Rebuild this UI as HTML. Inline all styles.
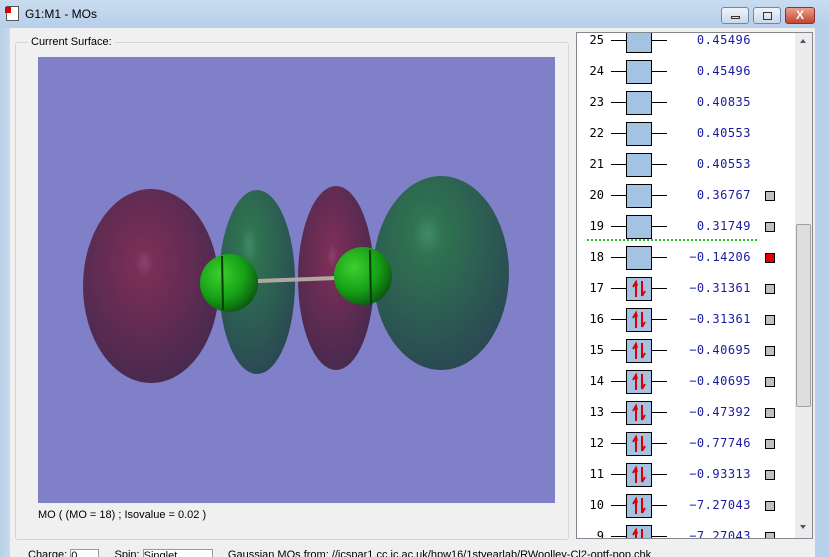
<!DOCTYPE html>
<html><head><meta charset="utf-8"><style>
*{margin:0;padding:0;box-sizing:border-box}
html,body{width:829px;height:557px;overflow:hidden}
body{background:#f0f0f0;position:relative;font-family:"Liberation Sans",sans-serif;font-size:11px}
.title{position:absolute;left:0;top:0;width:829px;height:28px;background:linear-gradient(#c9dcf0,#b7cfe9)}
.lf{position:absolute;left:0;top:28px;width:10px;height:529px;background:linear-gradient(90deg,#b8cfe8,#c8daee)}
.rf{position:absolute;left:815px;top:28px;width:14px;height:529px;background:#b9d0ea}
.tbtn{position:absolute;top:7px;height:17px;border:1px solid #6f86a6;border-radius:3px;background:linear-gradient(#eef3fa,#cbd9ea)}
.grp{position:absolute;left:15px;top:42px;width:554px;height:498px;border:1px solid #d5d5d5;border-radius:3px}
.list{position:absolute;left:576px;top:32px;width:237px;height:507px;background:#fff;border:1px solid #828790;overflow:hidden}
.row{position:absolute;left:0;width:220px;height:24px;font-family:"DejaVu Sans Mono","Liberation Mono",monospace;font-size:12px}
.num{position:absolute;right:193px;top:4px;color:#000}
.ln{position:absolute;left:34px;top:11px;width:56px;height:1px;background:#000}
.bx{position:absolute;left:49px;top:0;width:26px;height:24px;background:#a4c2e2;border:1px solid #000}
.val{position:absolute;right:46px;top:4px;color:#1a1aa0;letter-spacing:0.5px}
.sq{position:absolute;left:188px;top:7px;width:10px;height:10px;background:#c0c0c0;border:1px solid #000}
.sb{position:absolute;left:218px;top:0;width:17px;height:505px;background:#ececec}
</style></head><body>
<div class="title"></div>
<div style="position:absolute;left:6px;top:6px;width:13px;height:15px;background:#fff;border:1px solid #555"></div>
<div style="position:absolute;left:5px;top:7px;width:6px;height:6px;background:#d00"></div>
<div style="position:absolute;left:25px;top:7px;font-size:12px;color:#000">G1:M1 - MOs</div>
<div class="tbtn" style="left:721px;width:28px"><div style="position:absolute;left:9px;top:8px;width:9px;height:3px;border:1px solid #333"></div></div>
<div class="tbtn" style="left:753px;width:28px"><div style="position:absolute;left:9px;top:4px;width:9px;height:8px;border:1px solid #333"></div></div>
<div class="tbtn" style="left:785px;width:30px;background:linear-gradient(#e8a08c,#c5452f);border-color:#8a3426;color:#fff;text-align:center;font-weight:bold;font-size:12px;line-height:15px">X</div>
<div class="lf"></div><div class="rf"></div>
<div class="grp"></div>
<div style="position:absolute;left:28px;top:36px;background:#f0f0f0;padding:0 3px;font-size:11px">Current Surface:</div>
<svg style="position:absolute;left:38px;top:57px" width="517" height="446" viewBox="38 57 517 446">
<defs>
<radialGradient id="p" cx="0.45" cy="0.38" r="0.7"><stop offset="0" stop-color="#8a4470"/><stop offset="0.1" stop-color="#7a2e56"/><stop offset="1" stop-color="#42294e"/></radialGradient>
<radialGradient id="g" cx="0.4" cy="0.3" r="0.75"><stop offset="0" stop-color="#3f8a6a"/><stop offset="0.15" stop-color="#2f7350"/><stop offset="1" stop-color="#2a4654"/></radialGradient>
<radialGradient id="a" cx="0.35" cy="0.35" r="0.7"><stop offset="0" stop-color="#3cd030"/><stop offset="0.6" stop-color="#16a016"/><stop offset="1" stop-color="#0c5a10"/></radialGradient>
</defs>
<rect x="38" y="57" width="517" height="446" fill="#8080c8"/>
<ellipse cx="151" cy="286" rx="68" ry="97" fill="url(#p)"/>
<ellipse cx="257" cy="282" rx="38" ry="92" fill="url(#g)"/>
<ellipse cx="336" cy="278" rx="38" ry="92" fill="url(#p)"/>
<ellipse cx="441" cy="273" rx="68" ry="97" fill="url(#g)"/>
<line x1="258" y1="281" x2="336" y2="278" stroke="#b0a8a0" stroke-width="4"/>
<circle cx="229" cy="283" r="29" fill="url(#a)"/>
<circle cx="363" cy="276" r="29" fill="url(#a)"/>
<line x1="222" y1="256" x2="223" y2="310" stroke="#0a3a0a" stroke-width="2"/>
<line x1="370" y1="250" x2="371" y2="305" stroke="#0a3a0a" stroke-width="2"/>
</svg>
<div style="position:absolute;left:38px;top:509px;font-size:11px">MO ( (MO = 18) ; Isovalue = 0.02 )</div>
<div class="list">
<div class="sb">
<div style="position:absolute;left:5px;top:6px;border:3px solid transparent;border-bottom:4px solid #555;border-top:0"></div>
<div style="position:absolute;left:1px;top:191px;width:15px;height:183px;background:#dedede;border:1px solid #a0a0a0;border-radius:2px"></div>
<div style="position:absolute;left:5px;top:492px;border:3px solid transparent;border-top:4px solid #555;border-bottom:0"></div>
</div>
<div style="position:absolute;left:10px;top:206px;width:170px;border-top:2px dotted #20c020"></div>
</div>
<div style="position:absolute;left:28px;top:549px;font-size:11px;white-space:nowrap">Charge: <span style="display:inline-block;width:29px;height:14px;border:1px solid #999;background:#fff;vertical-align:top">0</span>&nbsp;&nbsp;&nbsp;&nbsp; Spin: <span style="display:inline-block;width:70px;height:14px;border:1px solid #999;background:#fff;vertical-align:top">Singlet</span>&nbsp;&nbsp;&nbsp;&nbsp; Gaussian MOs from: //icspar1.cc.ic.ac.uk/hpw16/1styearlab/RWoolley-Cl2-optf-pop.chk</div>
<script>
var d=[[25,"0.45496"],[24,"0.45496"],[23,"0.40835"],[22,"0.40553"],[21,"0.40553"],[20,"0.36767"],[19,"0.31749"],[18,"-0.14206"],[17,"-0.31361"],[16,"-0.31361"],[15,"-0.40695"],[14,"-0.40695"],[13,"-0.47392"],[12,"-0.77746"],[11,"-0.93313"],[10,"-7.27043"],[9,"-7.27043"]];
var h="";
d.forEach(function(r,i){
var y=28+i*31-32;var occ=r[0]<=17;
h+='<div class="row" style="top:'+y+'px">';
h+='<span class="num">'+r[0]+'</span><div class="ln"></div><div class="bx">'+(occ?'<svg width="24" height="22"><path d="M9 19V4M6 9L9 4L10 8" stroke="#d00" stroke-width="2" fill="none"/><path d="M15 3V18M15 18L18 13" stroke="#d00" stroke-width="2" fill="none"/></svg>':'')+'</div>';
h+='<span class="val">'+r[1].replace("-","&minus;")+'</span>';
if(r[0]<=20)h+='<div class="sq"'+(r[0]==18?' style="background:#e00000"':'')+'></div>';
h+='</div>';});
document.querySelector('.list').insertAdjacentHTML('beforeend',h);
</script>
</body></html>
